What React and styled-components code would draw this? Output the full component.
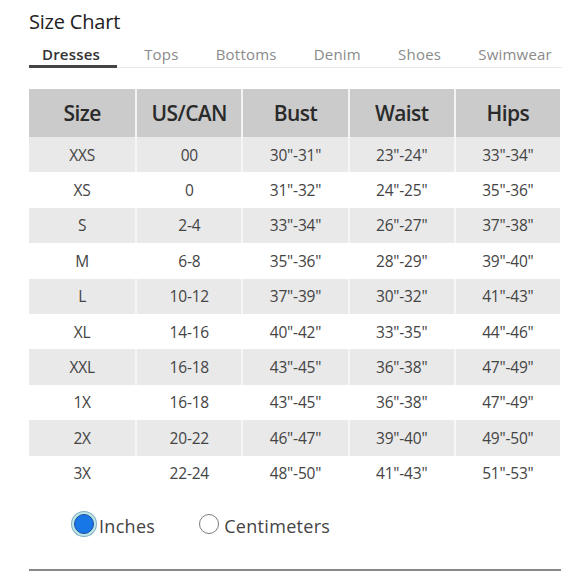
import React from "react";
import styled, { createGlobalStyle } from "styled-components";

const Global = createGlobalStyle`
  html, body { margin: 0; padding: 0; background: #fff; }
  body { font-family: "Open Sans", "Liberation Sans", sans-serif; }
`;

const Page = styled.div`
  width: 580px;
  height: 580px;
  box-sizing: border-box;
  padding: 10px 18px 0 29px;
  display: flex;
  flex-direction: column;
`;

const Title = styled.h1`
  margin: 0;
  font-size: 20px;
  font-weight: 400;
  line-height: 24px;
  color: #222;
  letter-spacing: -0.2px;
`;

const Tabs = styled.div`
  margin-top: 10px;
  display: flex;
  justify-content: space-between;
  border-bottom: 1px solid #e8e8e8;
`;

const Tab = styled.div`
  padding: 0 10px 1px 13px;
  font-size: 15px;
  line-height: 20px;
  color: ${(p) => (p.$active ? "#333" : "#8a8a8a")};
  font-weight: ${(p) => (p.$active ? 600 : 400)};
  border-bottom: 3px solid ${(p) => (p.$active ? "#444" : "transparent")};
  margin-bottom: -1px;
  ${(p) => (p.$active ? "width: 65px;" : "")}
  letter-spacing: 0.2px;
`;

const Table = styled.div`
  margin-top: 21px;
  width: 531px;
  display: grid;
  grid-template-columns: repeat(5, 1fr);
`;

const HeadCell = styled.div`
  height: 48px;
  background: #cbcbcb;
  display: flex;
  align-items: center;
  justify-content: center;
  font-size: 21px;
  font-weight: 600;
  color: #2a2a2a;
  letter-spacing: -0.6px;
  border-left: ${(p) => (p.$first ? "none" : "2px solid #f4f4f4")};
`;

const Cell = styled.div`
  height: 35.4px;
  background: ${(p) => (p.$shade ? "#e9e9e9" : "#fff")};
  display: flex;
  align-items: center;
  justify-content: center;
  font-size: 15.5px;
  color: #444;
  letter-spacing: -0.2px;
  border-left: ${(p) => (p.$first ? "none" : `2px solid ${p.$shade ? "#f6f6f6" : "#fff"}`)};
`;

const Units = styled.div`
  margin-top: 23px;
  padding-left: 45px;
  display: flex;
  align-items: center;
`;

const Option = styled.label`
  display: flex;
  align-items: center;
  gap: 5px;
  font-size: 18px;
  letter-spacing: 0.3px;
  color: #444;
  margin-right: ${(p) => p.$space || 0}px;
`;

const Radio = styled.span`
  width: 20px;
  height: 20px;
  margin-bottom: 5px;
  border-radius: 50%;
  box-sizing: border-box;
  display: inline-block;
  ${(p) =>
    p.$checked
      ? `background: #1877e6; border: 1.5px solid #1a4f9a; box-shadow: 0 0 0 2px #bfe4ea, 0 0 0 3px #7fb2c0;`
      : `background: #fff; border: 1.5px solid #7d7d7d;`}
`;

const Rule = styled.hr`
  margin: 30px 0 0 0;
  width: 532px;
  border: none;
  border-top: 2px solid #888;
`;

const tabs = ["Dresses", "Tops", "Bottoms", "Denim", "Shoes", "Swimwear"];
const heads = ["Size", "US/CAN", "Bust", "Waist", "Hips"];
const rows = [
  ["XXS", "00", '30"-31"', '23"-24"', '33"-34"'],
  ["XS", "0", '31"-32"', '24"-25"', '35"-36"'],
  ["S", "2-4", '33"-34"', '26"-27"', '37"-38"'],
  ["M", "6-8", '35"-36"', '28"-29"', '39"-40"'],
  ["L", "10-12", '37"-39"', '30"-32"', '41"-43"'],
  ["XL", "14-16", '40"-42"', '33"-35"', '44"-46"'],
  ["XXL", "16-18", '43"-45"', '36"-38"', '47"-49"'],
  ["1X", "16-18", '43"-45"', '36"-38"', '47"-49"'],
  ["2X", "20-22", '46"-47"', '39"-40"', '49"-50"'],
  ["3X", "22-24", '48"-50"', '41"-43"', '51"-53"'],
];

export default function App() {
  return (
    <>
      <Global />
      <Page>
        <Title>Size Chart</Title>
        <Tabs>
          {tabs.map((t, i) => (
            <Tab key={t} $active={i === 0}>
              {t}
            </Tab>
          ))}
        </Tabs>
        <Table>
          {heads.map((h, i) => (
            <HeadCell key={h} $first={i === 0}>
              {h}
            </HeadCell>
          ))}
          {rows.map((r, ri) =>
            r.map((c, ci) => (
              <Cell key={ri + "-" + ci} $shade={ri % 2 === 0} $first={ci === 0}>
                {c}
              </Cell>
            ))
          )}
        </Table>
        <Units>
          <Option $space={44}>
            <Radio $checked />
            Inches
          </Option>
          <Option>
            <Radio />
            Centimeters
          </Option>
        </Units>
        <Rule />
      </Page>
    </>
  );
}
